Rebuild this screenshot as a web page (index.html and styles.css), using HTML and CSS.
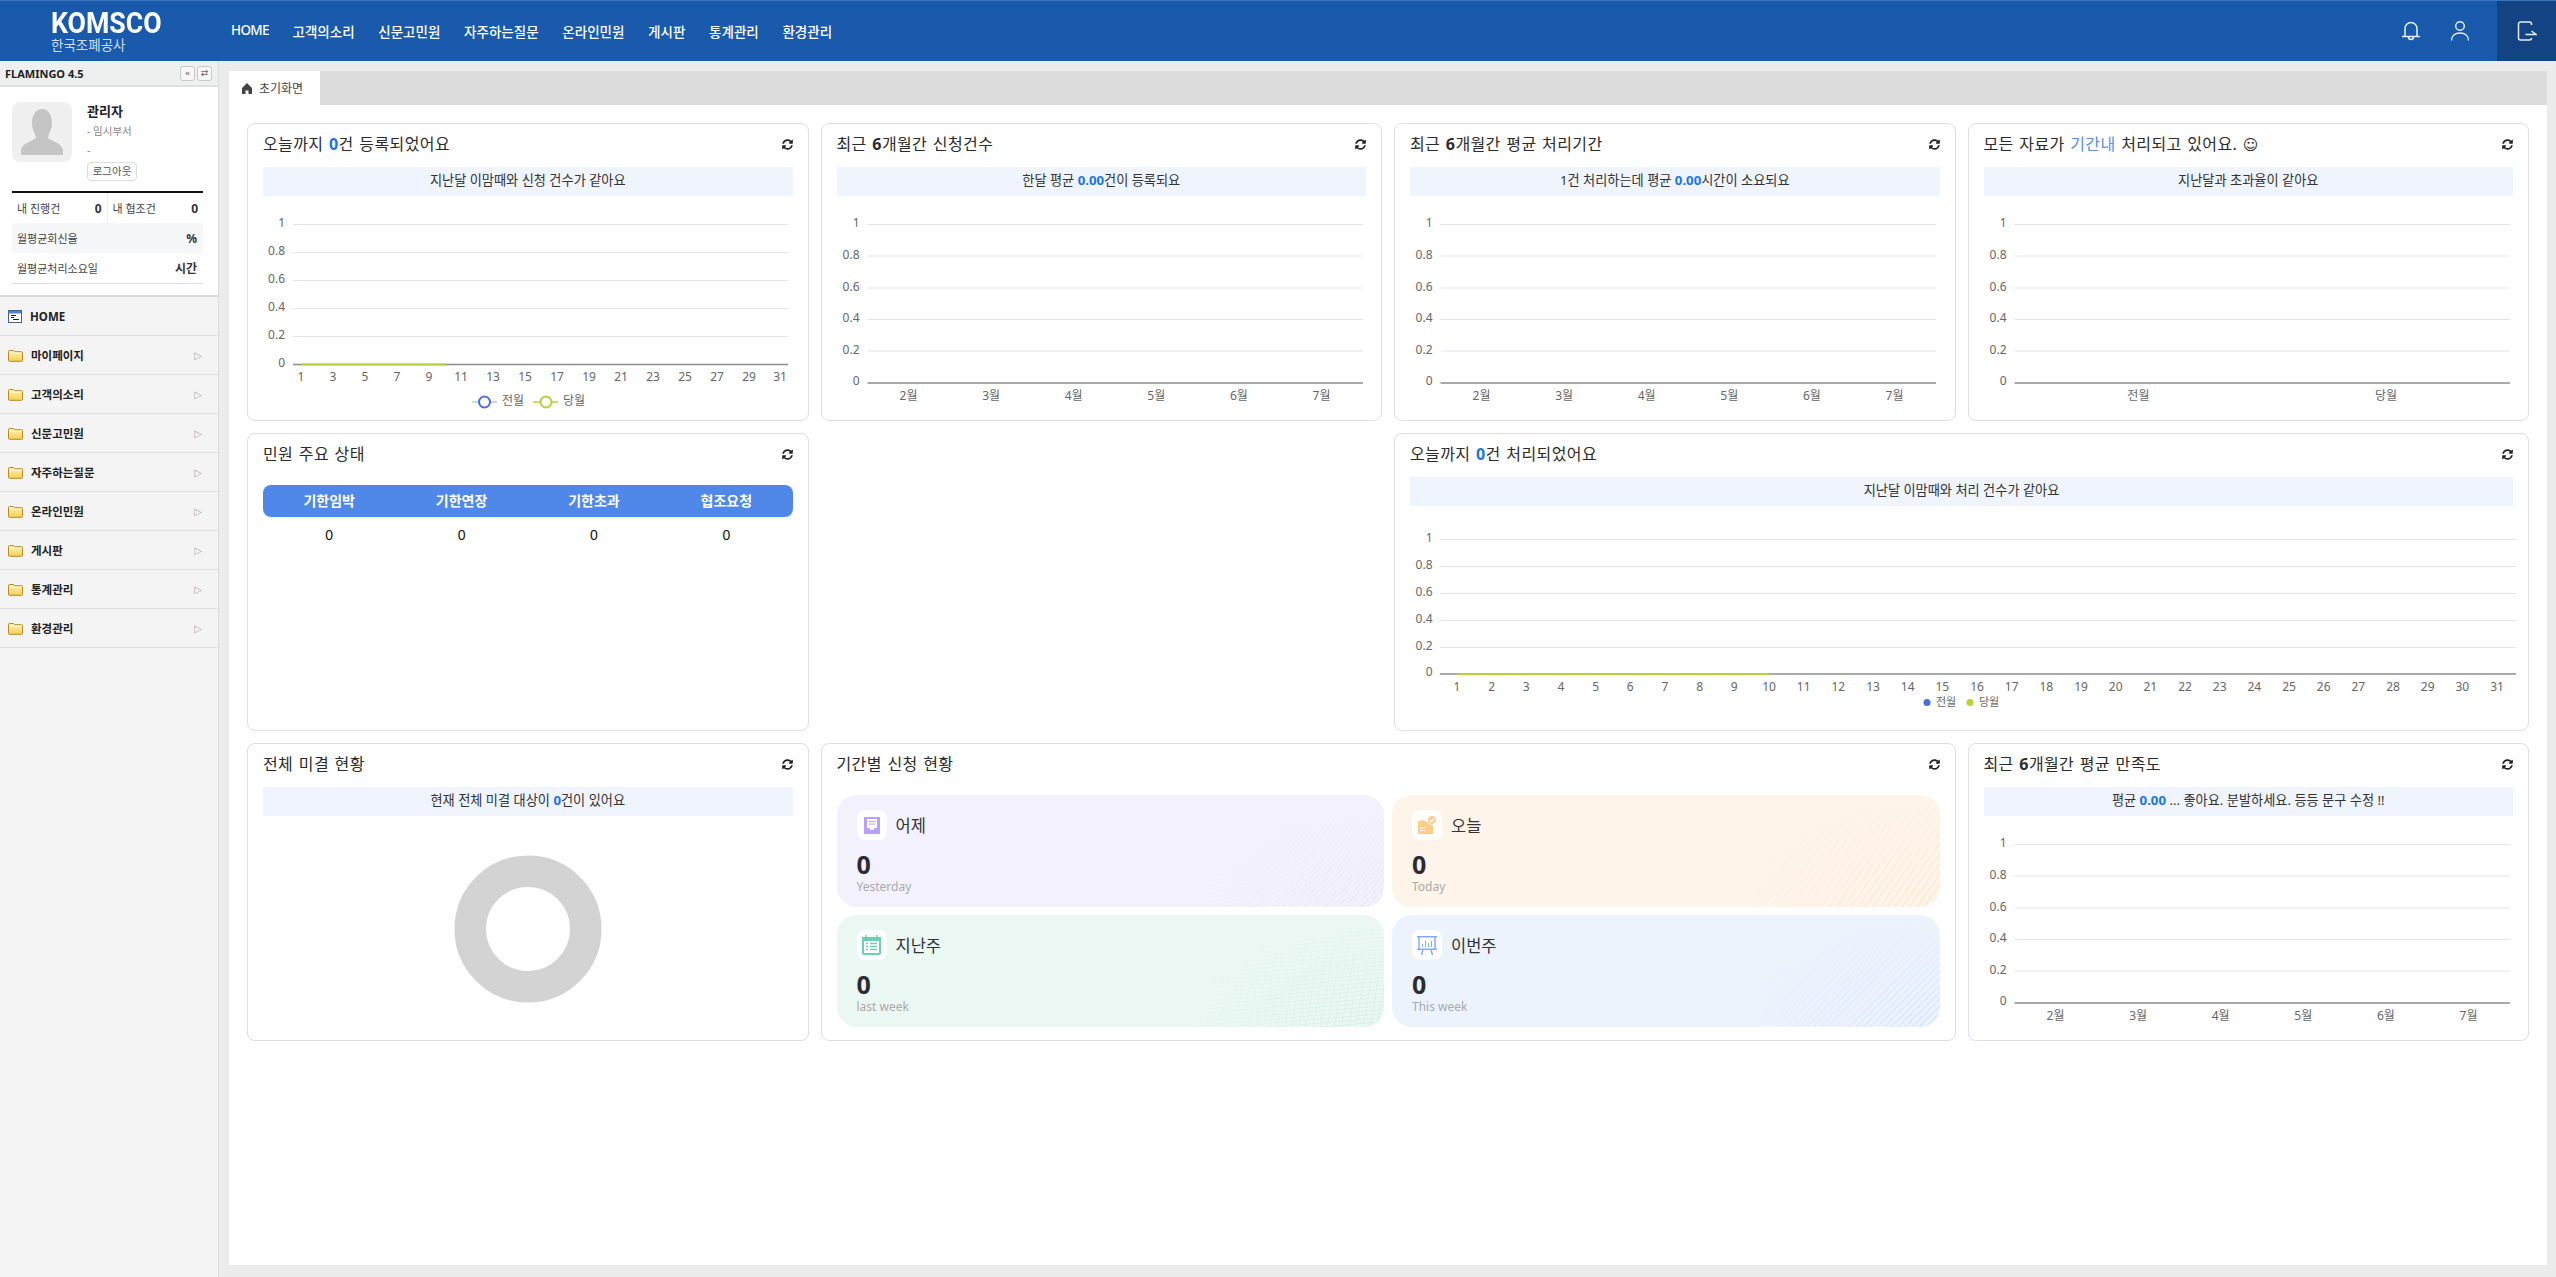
FILE: index.html
```html
<!DOCTYPE html>
<html lang="ko">

<head>
    <meta charset="UTF-8">
    <meta name="viewport" content="width=device-width, initial-scale=1.0">
    <title>FLAMINGO 4.5 - KOMSCO</title>
    <link rel="stylesheet" href="styles.css">
</head>

<body>
    <svg class="defs" width="0" height="0">
        <symbol id="refresh" viewBox="0 0 512 512">
            <path d="M370.72 133.28C339.458 104.008 298.888 87.962 255.848 88c-77.458.068-144.328 53.178-162.791 126.85-1.344 5.363-6.122 9.15-11.651 9.15H24.103c-7.498 0-13.194-6.807-11.807-14.176C33.933 94.924 134.813 8 256 8c66.448 0 126.791 26.136 171.315 68.685L463.03 40.97C478.149 25.851 504 36.559 504 57.941V192c0 13.255-10.745 24-24 24H345.941c-21.382 0-32.09-25.851-16.971-40.971l41.75-41.749zM32 296h134.059c21.382 0 32.09 25.851 16.971 40.971l-41.75 41.75c31.262 29.273 71.835 45.319 114.876 45.28 77.418-.07 144.315-53.144 162.787-126.849 1.344-5.363 6.122-9.15 11.651-9.15h57.304c7.498 0 13.194 6.807 11.807 14.176C478.067 417.076 377.187 504 256 504c-66.448 0-126.791-26.136-171.315-68.685L48.97 471.03C33.851 486.149 8 475.441 8 454.059V320c0-13.255 10.745-24 24-24z" />
        </symbol>
        <linearGradient id="folder-fill" x1="0" y1="0" x2="0" y2="1">
            <stop offset="0" stop-color="#fff3b8" />
            <stop offset="1" stop-color="#f6cf55" />
        </linearGradient>
        <symbol id="folder" viewBox="0 0 15 13">
            <path d="M.5 2.5a1 1 0 0 1 1-1h4l1 1.2h7a1 1 0 0 1 1 1v7.6a1 1 0 0 1-1 1h-12a1 1 0 0 1-1-1z" fill="url(#folder-fill)" stroke="#b98a1e" />
            <path d="M1 4.2h13" stroke="#fff8d8" />
        </symbol>
    </svg>

    <div class="navbar">
        <div class="logo-wrapper">
            <div class="logo">KOMSCO</div>
            <div class="logo-sub">한국조폐공사</div>
        </div>
        <div class="menu">
            <a href="#">HOME</a>
            <a href="#">고객의소리</a>
            <a href="#">신문고민원</a>
            <a href="#">자주하는질문</a>
            <a href="#">온라인민원</a>
            <a href="#">게시판</a>
            <a href="#">통계관리</a>
            <a href="#">환경관리</a>
        </div>
        <div class="nav-icons">
            <svg class="nav-icon" width="20" height="22" viewBox="0 0 20 22">
                <path d="M4 16V8.5a6 6 0 0 1 12 0V16M1 16.5h18M7.5 17a2.5 2.5 0 0 0 5 0" />
            </svg>
            <svg class="nav-icon" width="20" height="22" viewBox="0 0 20 22">
                <circle cx="10" cy="6" r="4.3" />
                <path d="M1.5 20.5c0-4.8 3.5-7.5 8.5-7.5s8.5 2.7 8.5 7.5" />
            </svg>
        </div>
        <div class="nav-exit">
            <svg class="nav-icon" width="20" height="20" viewBox="0 0 20 20">
                <path d="M14.5 4V3a2 2 0 0 0-2-2h-9a2 2 0 0 0-2 2v14a2 2 0 0 0 2 2h9a2 2 0 0 0 2-2M8.5 13.5H19L14.5 10" />
            </svg>
        </div>
    </div>

    <div class="wrap">
        <div class="sidebar">
            <div class="side-head">
                <span class="side-title">FLAMINGO 4.5</span>
                <span class="side-btns">
                    <span class="side-btn">«</span>
                    <span class="side-btn">⇄</span>
                </span>
            </div>
            <div class="profile">
                <div class="profile-top">
                    <div class="avatar">
                        <svg width="42" height="46" viewBox="0 0 42 46">
                            <path d="M21 0c6 0 10 6 10 14 0 6-3 10-4 14 0 4 15 5 15 14v4H0v-4c0-9 15-10 15-14-1-4-4-8-4-14C11 6 15 0 21 0z" fill="#c5c5c5" />
                        </svg>
                    </div>
                    <div class="profile-info">
                        <div class="profile-name">관리자</div>
                        <div class="profile-dept">- 임시부서</div>
                        <div class="profile-dept">-</div>
                        <div class="logout-btn">로그아웃</div>
                    </div>
                </div>
                <div class="stats">
                    <div class="stat-row">
                        <div class="stat-half"><span>내 진행건</span><b>0</b></div>
                        <div class="stat-half"><span>내 협조건</span><b>0</b></div>
                    </div>
                    <div class="stat-row stat-shade"><span>월평균회신율</span><b>%</b></div>
                    <div class="stat-row"><span>월평균처리소요일</span><b>시간</b></div>
                </div>
            </div>
            <div class="side-menu">
                <div class="side-item">
                    <svg class="side-icon" width="14" height="13" viewBox="0 0 14 13">
                        <rect x=".5" y=".5" width="13" height="12" fill="#fff" stroke="#4a5f86" />
                        <rect x="1" y="1" width="12" height="2.5" fill="#4f83d8" />
                        <path d="M3 5.5h5M3 7.5h3M5 9.5h6" stroke="#222" />
                    </svg>
                    <span>HOME</span>
                </div>
                <div class="side-item"><svg class="side-icon" width="15" height="13"><use href="#folder" /></svg><span>마이페이지</span><i class="side-arrow">▷</i></div>
                <div class="side-item"><svg class="side-icon" width="15" height="13"><use href="#folder" /></svg><span>고객의소리</span><i class="side-arrow">▷</i></div>
                <div class="side-item"><svg class="side-icon" width="15" height="13"><use href="#folder" /></svg><span>신문고민원</span><i class="side-arrow">▷</i></div>
                <div class="side-item"><svg class="side-icon" width="15" height="13"><use href="#folder" /></svg><span>자주하는질문</span><i class="side-arrow">▷</i></div>
                <div class="side-item"><svg class="side-icon" width="15" height="13"><use href="#folder" /></svg><span>온라인민원</span><i class="side-arrow">▷</i></div>
                <div class="side-item"><svg class="side-icon" width="15" height="13"><use href="#folder" /></svg><span>게시판</span><i class="side-arrow">▷</i></div>
                <div class="side-item"><svg class="side-icon" width="15" height="13"><use href="#folder" /></svg><span>통계관리</span><i class="side-arrow">▷</i></div>
                <div class="side-item"><svg class="side-icon" width="15" height="13"><use href="#folder" /></svg><span>환경관리</span><i class="side-arrow">▷</i></div>
            </div>
        </div>

        <div class="main">
            <div class="tabs">
                <div class="tab">
                    <svg width="10" height="11" viewBox="0 0 10 11">
                        <path d="M5 0l5 5v6H6.5V7.5h-3V11H0V5z" fill="#444" />
                    </svg>
                    <span>초기화면</span>
                </div>
            </div>

            <div class="dashboard">
                <!-- row 1 -->
                <div class="card">
                    <div class="card-head">
                        <div class="card-title">오늘까지 <b class="hl">0</b>건 등록되었어요</div>
                        <svg class="refresh" width="11" height="11"><use href="#refresh" /></svg>
                    </div>
                    <div class="info">지난달 이맘때와 신청 건수가 같아요</div>
                    <svg class="chart" width="530" height="220">
                        <path class="grid" d="M30 28.5H525M30 56.5H525M30 84.5H525M30 112.5H525M30 140.5H525" />
                        <path class="axis" d="M30 168.5H525" />
                        <path class="series-green" d="M38 168.5H182" />
                        <g class="y-labels">
                            <text x="22" y="31">1</text>
                            <text x="22" y="59">0.8</text>
                            <text x="22" y="87">0.6</text>
                            <text x="22" y="115">0.4</text>
                            <text x="22" y="143">0.2</text>
                            <text x="22" y="171">0</text>
                        </g>
                        <g class="x-labels">
                            <text x="38" y="185">1</text>
                            <text x="70" y="185">3</text>
                            <text x="102" y="185">5</text>
                            <text x="134" y="185">7</text>
                            <text x="166" y="185">9</text>
                            <text x="198" y="185">11</text>
                            <text x="230" y="185">13</text>
                            <text x="262" y="185">15</text>
                            <text x="294" y="185">17</text>
                            <text x="326" y="185">19</text>
                            <text x="358" y="185">21</text>
                            <text x="390" y="185">23</text>
                            <text x="422" y="185">25</text>
                            <text x="454" y="185">27</text>
                            <text x="486" y="185">29</text>
                            <text x="517" y="185">31</text>
                        </g>
                        <path d="M209 206h25" stroke="#c4c8d0" stroke-width="1.5" />
                        <circle cx="221.5" cy="206" r="5.5" fill="#fff" stroke="#4a6fdc" stroke-width="2" />
                        <text class="legend" x="239" y="209">전월</text>
                        <path d="M270 206h25" stroke="#b5d334" stroke-width="1.5" />
                        <circle cx="283" cy="206" r="5.5" fill="#fff" stroke="#b5d334" stroke-width="2" />
                        <text class="legend" x="300" y="209">당월</text>
                    </svg>
                </div>

                <div class="card">
                    <div class="card-head">
                        <div class="card-title">최근 <b class="num">6</b>개월간 신청건수</div>
                        <svg class="refresh" width="11" height="11"><use href="#refresh" /></svg>
                    </div>
                    <div class="info">한달 평균 <b class="hl">0.00</b>건이 등록되요</div>
                    <svg class="chart" width="530" height="220">
                        <path class="grid" d="M30.5 28.5H526M30.5 60H526M30.5 92H526M30.5 123.5H526M30.5 155H526" />
                        <path class="axis" d="M30.5 187H526" />
                        <g class="y-labels">
                            <text x="22.5" y="31">1</text>
                            <text x="22.5" y="63">0.8</text>
                            <text x="22.5" y="95">0.6</text>
                            <text x="22.5" y="126">0.4</text>
                            <text x="22.5" y="158">0.2</text>
                            <text x="22.5" y="189">0</text>
                        </g>
                        <g class="x-labels">
                            <text x="71.5" y="204">2월</text>
                            <text x="154.1" y="204">3월</text>
                            <text x="236.7" y="204">4월</text>
                            <text x="319.3" y="204">5월</text>
                            <text x="401.9" y="204">6월</text>
                            <text x="484.5" y="204">7월</text>
                        </g>
                    </svg>
                </div>

                <div class="card">
                    <div class="card-head">
                        <div class="card-title">최근 <b class="num">6</b>개월간 평균 처리기간</div>
                        <svg class="refresh" width="11" height="11"><use href="#refresh" /></svg>
                    </div>
                    <div class="info">1건 처리하는데 평균 <b class="hl">0.00</b>시간이 소요되요</div>
                    <svg class="chart" width="530" height="220">
                        <path class="grid" d="M30.5 28.5H526M30.5 60H526M30.5 92H526M30.5 123.5H526M30.5 155H526" />
                        <path class="axis" d="M30.5 187H526" />
                        <g class="y-labels">
                            <text x="22.5" y="31">1</text>
                            <text x="22.5" y="63">0.8</text>
                            <text x="22.5" y="95">0.6</text>
                            <text x="22.5" y="126">0.4</text>
                            <text x="22.5" y="158">0.2</text>
                            <text x="22.5" y="189">0</text>
                        </g>
                        <g class="x-labels">
                            <text x="71.5" y="204">2월</text>
                            <text x="154.1" y="204">3월</text>
                            <text x="236.7" y="204">4월</text>
                            <text x="319.3" y="204">5월</text>
                            <text x="401.9" y="204">6월</text>
                            <text x="484.5" y="204">7월</text>
                        </g>
                    </svg>
                </div>

                <div class="card">
                    <div class="card-head">
                        <div class="card-title">모든 자료가 <span class="hl-soft">기간내</span> 처리되고 있어요. <span class="smile">☺</span></div>
                        <svg class="refresh" width="11" height="11"><use href="#refresh" /></svg>
                    </div>
                    <div class="info">지난달과 초과율이 같아요</div>
                    <svg class="chart" width="530" height="220">
                        <path class="grid" d="M30.5 28.5H526M30.5 60H526M30.5 92H526M30.5 123.5H526M30.5 155H526" />
                        <path class="axis" d="M30.5 187H526" />
                        <g class="y-labels">
                            <text x="22.5" y="31">1</text>
                            <text x="22.5" y="63">0.8</text>
                            <text x="22.5" y="95">0.6</text>
                            <text x="22.5" y="126">0.4</text>
                            <text x="22.5" y="158">0.2</text>
                            <text x="22.5" y="189">0</text>
                        </g>
                        <g class="x-labels">
                            <text x="154.4" y="204">전월</text>
                            <text x="402.1" y="204">당월</text>
                        </g>
                    </svg>
                </div>

                <!-- row 2 -->
                <div class="card">
                    <div class="card-head">
                        <div class="card-title">민원 주요 상태</div>
                        <svg class="refresh" width="11" height="11"><use href="#refresh" /></svg>
                    </div>
                    <div class="status-table">
                        <div class="status-head">
                            <span>기한임박</span>
                            <span>기한연장</span>
                            <span>기한초과</span>
                            <span>협조요청</span>
                        </div>
                        <div class="status-body">
                            <span>0</span>
                            <span>0</span>
                            <span>0</span>
                            <span>0</span>
                        </div>
                    </div>
                </div>

                <div class="card card-wide card-right">
                    <div class="card-head">
                        <div class="card-title">오늘까지 <b class="hl">0</b>건 처리되었어요</div>
                        <svg class="refresh" width="11" height="11"><use href="#refresh" /></svg>
                    </div>
                    <div class="info">지난달 이맘때와 처리 건수가 같아요</div>
                    <svg class="chart" width="1104" height="220">
                        <path class="grid" d="M30 33.5H1106M30 60.5H1106M30 87.5H1106M30 114.5H1106M30 141.5H1106" />
                        <path class="axis" d="M30 168H1106" />
                        <path class="series-green" d="M47 168H359" />
                        <g class="y-labels">
                            <text x="22.5" y="36">1</text>
                            <text x="22.5" y="63">0.8</text>
                            <text x="22.5" y="90">0.6</text>
                            <text x="22.5" y="117">0.4</text>
                            <text x="22.5" y="144">0.2</text>
                            <text x="22.5" y="170">0</text>
                        </g>
                        <g class="x-labels">
                            <text x="47" y="185">1</text>
                            <text x="81.7" y="185">2</text>
                            <text x="116.3" y="185">3</text>
                            <text x="151" y="185">4</text>
                            <text x="185.7" y="185">5</text>
                            <text x="220.3" y="185">6</text>
                            <text x="255" y="185">7</text>
                            <text x="289.7" y="185">8</text>
                            <text x="324.3" y="185">9</text>
                            <text x="359" y="185">10</text>
                            <text x="393.7" y="185">11</text>
                            <text x="428.3" y="185">12</text>
                            <text x="463" y="185">13</text>
                            <text x="497.7" y="185">14</text>
                            <text x="532.3" y="185">15</text>
                            <text x="567" y="185">16</text>
                            <text x="601.7" y="185">17</text>
                            <text x="636.3" y="185">18</text>
                            <text x="671" y="185">19</text>
                            <text x="705.7" y="185">20</text>
                            <text x="740.3" y="185">21</text>
                            <text x="775" y="185">22</text>
                            <text x="809.7" y="185">23</text>
                            <text x="844.3" y="185">24</text>
                            <text x="879" y="185">25</text>
                            <text x="913.7" y="185">26</text>
                            <text x="948.3" y="185">27</text>
                            <text x="983" y="185">28</text>
                            <text x="1017.7" y="185">29</text>
                            <text x="1052.3" y="185">30</text>
                            <text x="1087" y="185">31</text>
                        </g>
                        <circle cx="517" cy="196.5" r="3.5" fill="#4a6fdc" />
                        <text class="legend-sm" x="526" y="200">전월</text>
                        <circle cx="560" cy="196.5" r="3.5" fill="#b5d334" />
                        <text class="legend-sm" x="569" y="200">당월</text>
                    </svg>
                </div>

                <!-- row 3 -->
                <div class="card">
                    <div class="card-head">
                        <div class="card-title">전체 미결 현황</div>
                        <svg class="refresh" width="11" height="11"><use href="#refresh" /></svg>
                    </div>
                    <div class="info">현재 전체 미결 대상이 <b class="hl">0</b>건이 있어요</div>
                    <svg class="chart" width="530" height="220">
                        <circle cx="265" cy="113" r="57.75" fill="none" stroke="#d3d3d3" stroke-width="31.5" />
                    </svg>
                </div>

                <div class="card card-wide">
                    <div class="card-head">
                        <div class="card-title">기간별 신청 현황</div>
                        <svg class="refresh" width="11" height="11"><use href="#refresh" /></svg>
                    </div>
                    <div class="tiles">
                        <div class="tile tile-purple">
                            <div class="tile-head">
                                <span class="tile-icon">
                                    <svg width="16" height="17" viewBox="0 0 16 17">
                                        <path d="M0 0h16v17H0z" fill="#bb9ffb" />
                                        <path d="M3 2h10v9h-2.5l-1 2h-3l-1-2H3z" fill="#fff" />
                                        <path d="M4.5 4.5h7M4.5 7h7" stroke="#bb9ffb" stroke-width="1.2" />
                                    </svg>
                                </span>
                                <span class="tile-title">어제</span>
                            </div>
                            <div class="tile-num">0</div>
                            <div class="tile-sub">Yesterday</div>
                        </div>
                        <div class="tile tile-orange">
                            <div class="tile-head">
                                <span class="tile-icon">
                                    <svg width="20" height="20" viewBox="0 0 20 20">
                                        <path d="M1 6l6-1 2 2h7v12H1z" fill="#fdcd8b" />
                                        <circle cx="15" cy="5" r="4.5" fill="#fdcd8b" stroke="#fff" />
                                        <path d="M12.8 5l1.7 1.7 3-3" fill="none" stroke="#fff" stroke-width="1.2" />
                                        <path d="M3 13h5M3 15.5h5" stroke="#fff" />
                                    </svg>
                                </span>
                                <span class="tile-title">오늘</span>
                            </div>
                            <div class="tile-num">0</div>
                            <div class="tile-sub">Today</div>
                        </div>
                        <div class="tile tile-green">
                            <div class="tile-head">
                                <span class="tile-icon">
                                    <svg width="19" height="20" viewBox="0 0 19 20">
                                        <path d="M0 2h19v16a2 2 0 0 1-2 2H2a2 2 0 0 1-2-2z" fill="#69d0b4" />
                                        <path d="M4 0v3M15 0v3" stroke="#69d0b4" stroke-width="1.5" />
                                        <path d="M2 6h15v12H2z" fill="#fff" />
                                        <path d="M4 8.5h2M8 8.5h7M4 11.5h2M8 11.5h7M4 14.5h2M8 14.5h7" stroke="#69d0b4" stroke-width="1.5" />
                                    </svg>
                                </span>
                                <span class="tile-title">지난주</span>
                            </div>
                            <div class="tile-num">0</div>
                            <div class="tile-sub">last week</div>
                        </div>
                        <div class="tile tile-blue">
                            <div class="tile-head">
                                <span class="tile-icon">
                                    <svg width="20" height="19" viewBox="0 0 20 19">
                                        <path d="M0 .7h20M0 13.3h20M2 1v12M18 1v12M6 14l-1.5 5M14 14l1.5 5" stroke="#83abfb" stroke-width="1.5" fill="none" />
                                        <path d="M5.5 11V8M8.5 11V4.5M11.5 11V7M14.5 11V5" stroke="#83abfb" />
                                    </svg>
                                </span>
                                <span class="tile-title">이번주</span>
                            </div>
                            <div class="tile-num">0</div>
                            <div class="tile-sub">This week</div>
                        </div>
                    </div>
                </div>

                <div class="card">
                    <div class="card-head">
                        <div class="card-title">최근 <b class="num">6</b>개월간 평균 만족도</div>
                        <svg class="refresh" width="11" height="11"><use href="#refresh" /></svg>
                    </div>
                    <div class="info">평균 <b class="hl">0.00</b> ... 좋아요. 분발하세요. 등등 문구 수정 !!</div>
                    <svg class="chart" width="530" height="220">
                        <path class="grid" d="M30.5 28.5H526M30.5 60H526M30.5 92H526M30.5 123.5H526M30.5 155H526" />
                        <path class="axis" d="M30.5 187H526" />
                        <g class="y-labels">
                            <text x="22.5" y="31">1</text>
                            <text x="22.5" y="63">0.8</text>
                            <text x="22.5" y="95">0.6</text>
                            <text x="22.5" y="126">0.4</text>
                            <text x="22.5" y="158">0.2</text>
                            <text x="22.5" y="189">0</text>
                        </g>
                        <g class="x-labels">
                            <text x="71.5" y="204">2월</text>
                            <text x="154.1" y="204">3월</text>
                            <text x="236.7" y="204">4월</text>
                            <text x="319.3" y="204">5월</text>
                            <text x="401.9" y="204">6월</text>
                            <text x="484.5" y="204">7월</text>
                        </g>
                    </svg>
                </div>
            </div>
        </div>
    </div>
</body>

</html>
```

FILE: styles.css
```css
* {
    box-sizing: border-box;
}

html, body {
    height: 100%;
}

body {
    font-family: "Noto Sans", "Noto Sans CJK KR", sans-serif;
    background-color: #ececec;
    color: #333;
    margin: 0;
    padding: 0;
    overflow: hidden;
}

.defs {
    display: block;
    height: 0;
}

/* top bar */
.navbar {
    display: flex;
    align-items: center;
    height: 61px;
    padding-left: 51px;
    background-color: #1a5aac;
    border-top: 1px solid #3a74bb;
    color: white;
}

.logo-wrapper {
    width: 180px;
}

.logo {
    font-family: Roboto, sans-serif;
    font-size: 30px;
    font-weight: 700;
    line-height: 26px;
    transform: scaleX(0.89);
    transform-origin: left;
}

.logo-sub {
    font-size: 13.5px;
    line-height: 15px;
    margin-top: 2px;
    color: #cfdcee;
}

.menu {
    display: flex;
    gap: 23.7px;
}

.menu a {
    text-decoration: none;
    color: white;
    font-size: 13.5px;
    font-weight: 500;
}

.menu a:first-child {
    letter-spacing: -0.7px;
}

.nav-icons {
    display: flex;
    gap: 29px;
    margin-left: auto;
    margin-right: 27px;
}

.nav-icon {
    fill: none;
    stroke: #e8eef6;
    stroke-width: 1.5;
}

.nav-exit {
    display: flex;
    align-items: center;
    justify-content: center;
    width: 59px;
    height: 60px;
    background-color: #134383;
}

/* layout under the top bar */
.wrap {
    display: flex;
    height: calc(100% - 61px);
}

.sidebar {
    flex-shrink: 0;
    width: 219px;
    background-color: #f4f4f4;
    border-right: 1px solid #dcdcdc;
}

.side-head {
    display: flex;
    justify-content: space-between;
    align-items: center;
    height: 26px;
    padding: 0 6px 0 5px;
    background-color: #eeefef;
    border-bottom: 2px solid #dfe0e2;
}

.side-title {
    font-size: 11px;
    font-weight: 700;
    color: #222;
}

.side-btns {
    display: flex;
    gap: 2px;
}

.side-btn {
    display: flex;
    align-items: center;
    justify-content: center;
    width: 15px;
    height: 15px;
    border: 1px solid #c9c9c9;
    border-radius: 3px;
    background-color: #f7f7f7;
    color: #666;
    font-family: "DejaVu Sans", sans-serif;
    font-size: 9px;
}

.profile {
    height: 210px;
    padding: 15px 15px 0 12px;
    background-color: #fff;
    border-bottom: 2px solid #d9d9d9;
}

.profile-top {
    display: flex;
    gap: 15px;
    height: 89px;
}

.avatar {
    display: flex;
    align-items: flex-end;
    justify-content: center;
    width: 60px;
    height: 60px;
    padding-bottom: 7px;
    background-color: #f0f0f0;
    border-radius: 8px;
}

.profile-name {
    font-size: 13px;
    font-weight: 700;
    line-height: 18px;
    color: #222;
}

.profile-dept {
    font-size: 10.5px;
    line-height: 16px;
    margin-top: 3px;
    color: #888;
}

.logout-btn {
    width: 50px;
    height: 19px;
    margin-top: 4px;
    border: 1px solid #ddd;
    border-radius: 4px;
    font-size: 10.5px;
    line-height: 16px;
    text-align: center;
    color: #555;
}

.stats {
    border-top: 2px solid #111;
    border-bottom: 1px solid #ddd;
}

.stat-row {
    display: flex;
    justify-content: space-between;
    align-items: center;
    height: 30px;
    padding: 0 6px 0 5px;
    font-size: 11px;
    color: #444;
}

.stat-row b {
    font-size: 12px;
    color: #333;
}

.stat-row:first-child {
    padding: 0;
}

.stat-half {
    display: flex;
    justify-content: space-between;
    align-items: center;
    width: 50%;
    height: 100%;
    padding: 0 5px;
}

.stat-half:first-child {
    border-right: 1px solid #eee;
}

.stat-shade {
    background-color: #f6f7f9;
}

.side-item {
    display: flex;
    align-items: center;
    height: 39px;
    padding: 0 16px 0 8px;
    border-bottom: 1px solid #dfe0e4;
    font-size: 11.5px;
    font-weight: 700;
    color: #222;
}

.side-icon {
    margin-right: 8px;
    flex-shrink: 0;
}

.side-arrow {
    margin-left: auto;
    font-family: "DejaVu Sans", sans-serif;
    font-size: 10px;
    font-style: normal;
    font-weight: 400;
    color: #aaa;
}

.main {
    flex: 1;
    min-width: 0;
    margin: 10px 9px 12px 10px;
    background-color: #fff;
}

.tabs {
    height: 34px;
    background-color: #dcdcdc;
}

.tab {
    display: flex;
    align-items: center;
    gap: 7px;
    width: 91px;
    height: 100%;
    padding-left: 13px;
    background-color: #fff;
    font-size: 12px;
    color: #444;
}

/* dashboard cards */
.dashboard {
    display: grid;
    grid-template-columns: repeat(4, minmax(0, 1fr));
    grid-auto-rows: 298px;
    gap: 12px;
    padding: 18px;
}

.card {
    padding: 0 15px;
    background-color: #fff;
    border: 1px solid #dcdfe8;
    border-radius: 8px;
}

.card-wide {
    grid-column: span 2;
}

.card-right {
    grid-column: 3 / span 2;
}

.card-head {
    display: flex;
    justify-content: space-between;
    align-items: center;
    height: 38px;
    margin-bottom: 5px;
}

.card-title {
    font-size: 16px;
    font-weight: 400;
    letter-spacing: 0.4px;
    word-spacing: 1px;
    color: #2b2b2b;
}

.card-title .num {
    font-weight: 700;
}

.smile {
    font-family: "DejaVu Sans", sans-serif;
    font-size: 15px;
}

.refresh {
    fill: #222;
    margin-top: 3px;
}

.hl {
    color: #1a73e8;
    font-weight: 700;
}

.hl-soft {
    color: #5b90e8;
}

.info {
    height: 29px;
    background-color: #eff4fd;
    font-size: 13.2px;
    line-height: 27px;
    text-align: center;
    color: #333;
}

.chart {
    display: block;
    overflow: visible;
}

.chart .grid {
    stroke: #e2e5ee;
    stroke-width: 1;
    fill: none;
}

.chart .axis {
    stroke: #8c8c8c;
    stroke-width: 1.5;
}

.chart .series-green {
    stroke: #b5d334;
    stroke-width: 2;
}

.y-labels text {
    font-size: 12px;
    fill: #666;
    text-anchor: end;
}

.x-labels text {
    font-size: 12px;
    fill: #666;
    text-anchor: middle;
}

.legend {
    font-size: 12px;
    fill: #666;
}

.legend-sm {
    font-size: 11px;
    fill: #666;
}

/* status table */
.status-table {
    margin-top: 13px;
}

.status-head,
.status-body {
    display: grid;
    grid-template-columns: repeat(4, 1fr);
    text-align: center;
}

.status-head {
    height: 32px;
    background-color: #5088ea;
    border-radius: 8px;
    font-size: 14px;
    font-weight: 700;
    line-height: 31px;
    color: #fff;
}

.status-body {
    margin-top: 9px;
    font-family: "Liberation Sans", sans-serif;
    font-size: 14px;
    line-height: 18px;
    color: #111;
}

/* period tiles */
.tiles {
    display: grid;
    grid-template-columns: 1fr 1fr;
    grid-auto-rows: 112px;
    gap: 8px;
    margin-top: 13px;
}

.tile {
    position: relative;
    overflow: hidden;
    padding: 15px 20px;
    border-radius: 20px;
}

.tile::after {
    content: "";
    position: absolute;
    right: 0;
    bottom: 0;
    width: 200px;
    height: 112px;
    -webkit-mask-image: radial-gradient(ellipse at 100% 100%, #000 5%, transparent 70%);
    mask-image: radial-gradient(ellipse at 100% 100%, #000 5%, transparent 70%);
}

.tile-purple {
    background-color: #f3f1fc;
}

.tile-purple::after {
    background: repeating-radial-gradient(circle at 0% -60%, transparent 0 3px, #e9e5f8 3px 4px);
}

.tile-orange {
    background-color: #fef4ea;
}

.tile-orange::after {
    background: repeating-linear-gradient(125deg, transparent 0 4px, #fcead7 4px 6px);
}

.tile-green {
    background-color: #ebf7f3;
}

.tile-green::after {
    background:
        repeating-linear-gradient(175deg, transparent 0 3px, #d8f0e8 3px 4px),
        repeating-linear-gradient(100deg, transparent 0 6px, #d8f0e8 6px 7px);
}

.tile-blue {
    background-color: #ecf3fd;
}

.tile-blue::after {
    background: repeating-linear-gradient(135deg, #dce8fb 0 2px, transparent 2px 5px);
}

.tile-head {
    display: flex;
    align-items: center;
    gap: 9px;
}

.tile-icon {
    display: flex;
    align-items: center;
    justify-content: center;
    width: 30px;
    height: 30px;
    background-color: #fff;
    border-radius: 8px;
}

.tile-title {
    font-size: 16.5px;
    color: #333;
}

.tile-num {
    margin-top: 9px;
    font-size: 25px;
    font-weight: 700;
    line-height: 30px;
    color: #2b2b33;
}

.tile-sub {
    font-size: 12px;
    line-height: 16px;
    color: #aaa;
}
```
